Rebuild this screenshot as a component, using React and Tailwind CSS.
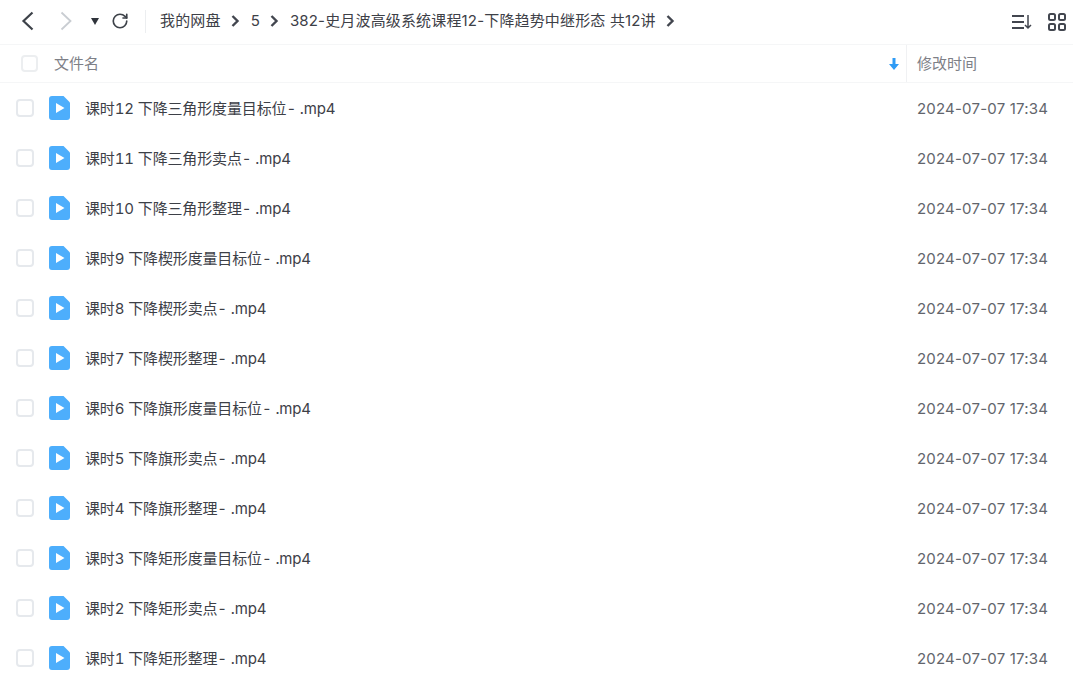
import { RotateCw } from 'lucide-react';

const files = [
  '课时12 下降三角形度量目标位- .mp4',
  '课时11 下降三角形卖点- .mp4',
  '课时10 下降三角形整理- .mp4',
  '课时9 下降楔形度量目标位- .mp4',
  '课时8 下降楔形卖点- .mp4',
  '课时7 下降楔形整理- .mp4',
  '课时6 下降旗形度量目标位- .mp4',
  '课时5 下降旗形卖点- .mp4',
  '课时4 下降旗形整理- .mp4',
  '课时3 下降矩形度量目标位- .mp4',
  '课时2 下降矩形卖点- .mp4',
  '课时1 下降矩形整理- .mp4',
];

const crumbs = ['我的网盘', '5', '382-史月波高级系统课程12-下降趋势中继形态 共12讲'];

function VideoIcon() {
  return (
    <svg width="21" height="24" viewBox="0 0 21 24" className="block shrink-0">
      <path d="M3 0h11.500l6.500 6.500V21a3 3 0 0 1-3 3H3a3 3 0 0 1-3-3V3a3 3 0 0 1 3-3z" fill="#4DAEFC" />
      <path d="M7 7l8.500 5L7 17z" fill="#fff" />
    </svg>
  );
}

function Crumb({ label }) {
  return (
    <>
      <span className="whitespace-nowrap tracking-[0.16px]">{label}</span>
      <svg width="9" height="12" viewBox="0 0 9 12" fill="none" stroke="#42464f" strokeWidth="2.4" className="mx-[10.500px] shrink-0">
        <path d="M1.500 1l5 5-5 5" />
      </svg>
    </>
  );
}

export default function App() {
  return (
    <div className="h-[694px] w-[1073px] overflow-hidden bg-white text-[15px] text-[#3d4047] font-['Inter','Noto_Sans_CJK_SC',sans-serif]">
      <div className="flex h-[45px] items-center border-b border-[#f5f6f7] pb-[2px] pl-[21px] pr-[7px]">
        <svg width="13" height="20" viewBox="0 0 13 20" fill="none" stroke="#3d4249" strokeWidth="2.2">
          <path d="M11.500 1.500L2.500 10l9 8.500" />
        </svg>
        <svg width="13" height="20" viewBox="0 0 13 20" fill="none" stroke="#c9cdd2" strokeWidth="1.800" className="ml-[26px]">
          <path d="M1.500 1.500L10.500 10l-9 8.500" />
        </svg>
        <svg width="8" height="7" viewBox="0 0 8 7" className="ml-[18px]">
          <path d="M0 0h8L4 7z" fill="#2f343b" />
        </svg>
        <RotateCw size={18} strokeWidth={2.2} className="text-[#3d4249] ml-[12px]" />
        <div className="ml-[16px] h-[23px] w-px bg-[#eceef0]" />
        <div className="ml-[14px] flex items-center">
          {crumbs.map((c) => <Crumb key={c} label={c} />)}
        </div>
        <div className="ml-auto flex items-center gap-[16px] pt-[2px]">
          <svg width="20" height="16" viewBox="0 0 20 16" fill="none" stroke="#42464f" strokeWidth="2">
            <path d="M0 2h12M0 8h12M0 14h12" />
            <path d="M16 1v13M13 11l3 3 3-3" strokeWidth="1.500" />
          </svg>
          <svg width="18" height="18" viewBox="0 0 18 18" fill="none" stroke="#42464f" strokeWidth="2">
            <rect x="1" y="1" width="6" height="6" rx="1.500" />
            <rect x="11" y="1" width="6" height="6" rx="1.500" />
            <rect x="1" y="11" width="6" height="6" rx="1.500" />
            <rect x="11" y="11" width="6" height="6" rx="1.500" />
          </svg>
        </div>
      </div>

      <div className="flex h-[38px] items-center border-b border-[#f5f6f7] text-[#7e8087]">
        <span className="ml-[21px] size-[17px] rounded-[4px] border-2 border-[#eceef0]" />
        <span className="ml-[16px] pt-[2px]">文件名</span>
        <svg width="10" height="12" viewBox="0 0 10 12" className="ml-auto mr-[5px] mt-[1px]">
          <path d="M3.500 0h3v6H10l-5 6-5-6h3.500z" fill="#2f9bf5" />
        </svg>
        <div className="ml-[2px] flex h-full w-[167px] items-center border-l border-[#f0f1f3] pl-[10px] pt-[2px]">修改时间</div>
      </div>

      <div>
        {files.map((name) => (
          <div key={name} className="flex h-[50px] items-center">
            <span className="ml-[16px] size-[18px] shrink-0 rounded-[4px] border-2 border-[#e6e9ed]" />
            <span className="ml-[15px]"><VideoIcon /></span>
            <span className="ml-[15px] pt-[2px] tabular-nums tracking-[-0.14px]">{name}</span>
            <span className="ml-auto w-[156px] pt-[2px] tracking-[0.2px] text-[#62656c]">2024-07-07 17:34</span>
          </div>
        ))}
      </div>
    </div>
  );
}
